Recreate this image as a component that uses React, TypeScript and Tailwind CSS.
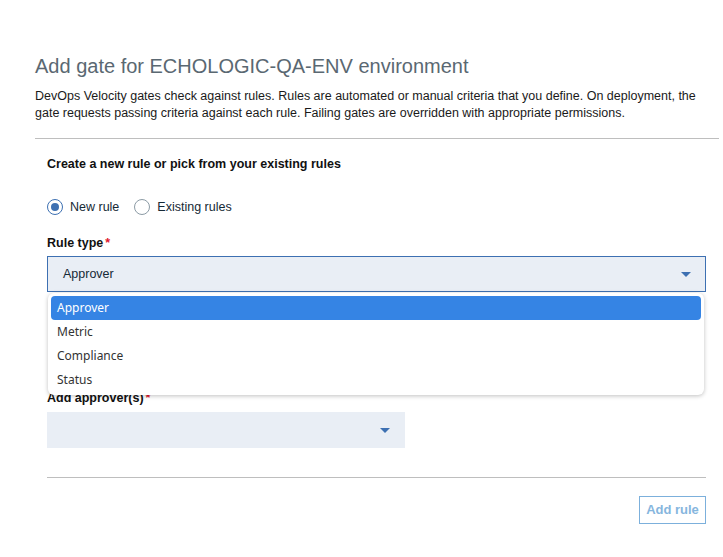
import { useState } from "react"

const ruleTypes = ["Approver", "Metric", "Compliance", "Status"]

function Caret() {
  return (
    <svg width="10" height="5" viewBox="0 0 10 5" className="fill-[#3d70b2]">
      <path d="M0 0h10L5 5z" />
    </svg>
  )
}

function Radio({ checked, label }: { checked: boolean; label: string }) {
  return (
    <label className="flex items-center gap-[7px] cursor-pointer">
      <span
        className={
          checked
            ? "w-[16px] h-[16px] rounded-full border border-[#3d70b2] flex items-center justify-center"
            : "w-[16px] h-[16px] rounded-full border border-[#8c9ba5] flex items-center justify-center"
        }
      >
        {checked && <span className="w-[8px] h-[8px] rounded-full bg-[#3d70b2]" />}
      </span>
      <span className="text-[12.5px] leading-[16px] text-[#152935]">{label}</span>
    </label>
  )
}

export default function App() {
  const [ruleType] = useState("Approver")

  return (
    <div className="min-h-screen bg-white font-['Liberation_Sans',Arial,sans-serif] text-[#152935]">
      <div className="pl-[35px] pr-[4px] pt-[54px]">
        {/* Header */}
        <h1 className="text-[20px] leading-[24px] text-[#5a6872]">
          Add gate for ECHOLOGIC-QA-ENV environment
        </h1>
        <p className="mt-[10px] text-[12.5px] leading-[17px] text-[#1a1a1a] pr-[16px]">
          DevOps Velocity gates check against rules. Rules are automated or manual criteria that you define. On deployment, the gate requests passing criteria against each rule. Failing gates are overridden with appropriate permissions.
        </p>
        <div className="mt-[16px] h-px bg-[#bebebe]" />

        {/* Form */}
        <div className="pl-[12px] pr-[13px]">
          <h2 className="mt-[17px] text-[12.5px] leading-[16px] font-bold text-[#111]">
            Create a new rule or pick from your existing rules
          </h2>

          <div className="mt-[27px] flex items-center gap-[15px]">
            <Radio checked label="New rule" />
            <Radio checked={false} label="Existing rules" />
          </div>

          <div className="mt-[20px] text-[12.5px] leading-[16px] font-bold text-[#111]">
            Rule type<span className="text-[#e0182d] ml-[2px]">*</span>
          </div>
          <div className="relative mt-[5px]">
            <div className="h-[36px] bg-[#e9eef5] border border-[#3d70b2] flex items-center justify-between pl-[15px] pr-[14px]">
              <span className="text-[12.5px] text-[#152935]">{ruleType}</span>
              <Caret />
            </div>
            {/* Open menu */}
            <div className="absolute left-[1px] right-[2px] top-[37px] z-10 bg-white rounded-[6px] shadow-[0_1px_4px_rgba(0,0,0,0.25)] py-[3px] px-[3px] font-['Noto_Sans',sans-serif]">
              {ruleTypes.map((t) => (
                <div
                  key={t}
                  className={
                    t === ruleType
                      ? "h-[24px] flex items-center px-[6px] rounded-[4px] bg-[#3584e4] text-white text-[12px]"
                      : "h-[24px] flex items-center px-[6px] text-[#333] text-[12px]"
                  }
                >
                  {t}
                </div>
              ))}
            </div>
          </div>

          <div className="mt-[98px] text-[12.5px] leading-[16px] font-bold text-[#111]">
            Add approver(s)<span className="text-[#e0182d] ml-[2px]">*</span>
          </div>
          <div className="mt-[6px] w-[358px] h-[36px] bg-[#e9eef5] flex items-center justify-end pr-[15px]">
            <Caret />
          </div>

          <div className="mt-[29px] h-px bg-[#bebebe]" />

          <div className="mt-[18px] flex justify-end">
            <button className="h-[28px] w-[67px] border border-[#7cb0dc] text-[13px] font-bold text-[#86b6de] bg-white">
              Add rule
            </button>
          </div>
        </div>
      </div>
    </div>
  )
}
